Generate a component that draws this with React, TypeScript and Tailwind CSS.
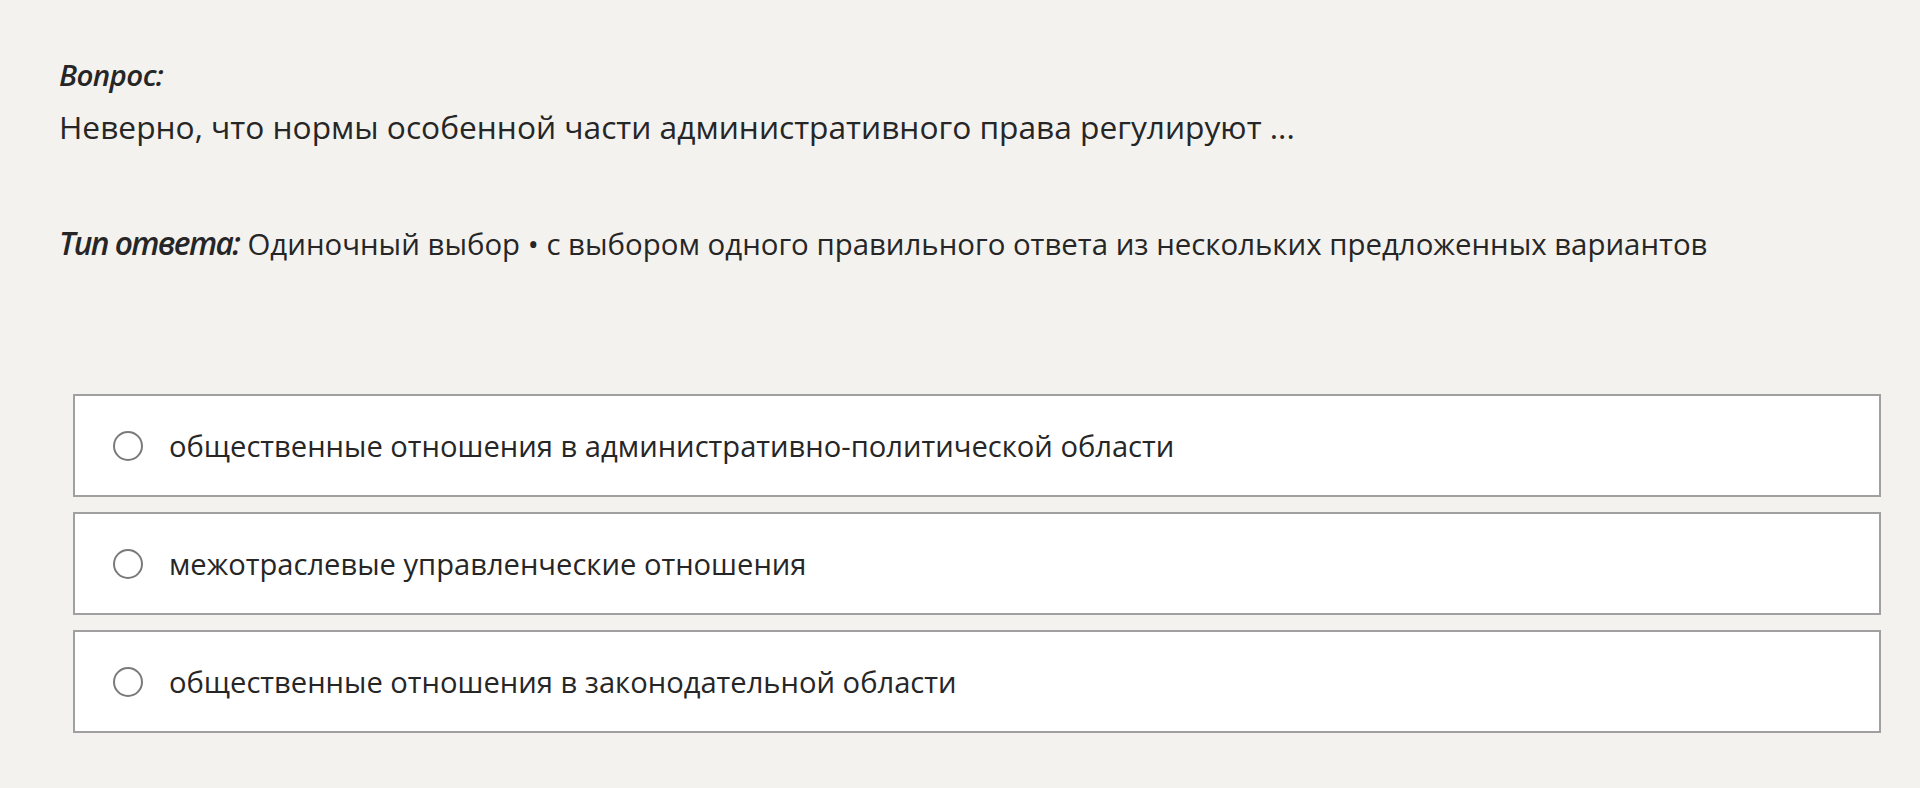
import { useState } from 'react';

const options = [
  'общественные отношения в административно-политической области',
  'межотраслевые управленческие отношения',
  'общественные отношения в законодательной области',
];

export default function App() {
  const [picked, setPicked] = useState<number | null>(null);

  return (
    <div className="min-h-[788px] bg-[#f3f2ef] pl-[59px] pr-[39px] pt-[57px] text-[#262626] font-['Open_Sans',sans-serif]">
      {/* Question */}
      <div className="text-[29.5px] leading-[36px] italic font-semibold tracking-[-0.02em]">Вопрос:</div>
      <div className="mt-[14px] text-[31.7px] leading-[40px]">
        Неверно, что нормы особенной части административного права регулируют ...
      </div>

      <div className="mt-[76px] text-[31.7px] leading-[40px]">
        <span className="italic font-semibold tracking-[-0.05em]">Тип ответа:</span>{' '}
        <span className="text-[29.4px]">
          Одиночный выбор • с выбором одного правильного ответа из нескольких предложенных вариантов
        </span>
      </div>

      {/* Options */}
      <div className="mt-[130px] ml-[14px] flex flex-col gap-[15px]">
        {options.map((text, i) => (
          <button
            key={i}
            onClick={() => setPicked(i)}
            className="h-[103px] flex items-center gap-[26px] bg-white border-2 border-[#a0a0a0] pl-[38px] text-left"
          >
            <span className="w-[30px] h-[30px] rounded-full border-2 border-[#7a7a7a] flex items-center justify-center shrink-0">
              {picked === i && <span className="w-[16px] h-[16px] rounded-full bg-[#262626]" />}
            </span>
            <span className="text-[29.15px] leading-[40px]">{text}</span>
          </button>
        ))}
      </div>
    </div>
  );
}
